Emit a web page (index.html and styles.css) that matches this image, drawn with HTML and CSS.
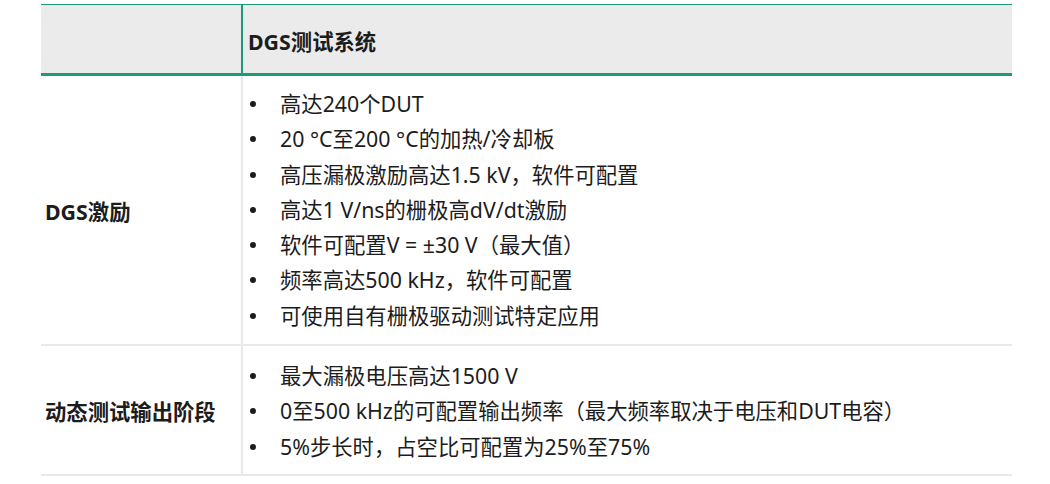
FILE: index.html
```html
<!DOCTYPE html>
<html lang="zh-CN">
<head>
<meta charset="utf-8">
<link rel="stylesheet" href="styles.css">
</head>
<body>
<div class="wrap">
<table class="spec">
  <thead>
    <tr>
      <th class="c1"></th>
      <th class="c2">DGS测试系统</th>
    </tr>
  </thead>
  <tbody>
    <tr>
      <td class="c1 label">DGS激励</td>
      <td class="c2">
        <ul class="list list-a">
          <li>高达240个DUT</li>
          <li>20 °C至200 °C的加热/冷却板</li>
          <li>高压漏极激励高达1.5 kV，软件可配置</li>
          <li>高达1 V/ns的栅极高dV/dt激励</li>
          <li>软件可配置V = ±30 V（最大值）</li>
          <li>频率高达500 kHz，软件可配置</li>
          <li>可使用自有栅极驱动测试特定应用</li>
        </ul>
      </td>
    </tr>
    <tr>
      <td class="c1 label">动态测试输出阶段</td>
      <td class="c2">
        <ul class="list list-b">
          <li>最大漏极电压高达1500 V</li>
          <li>0至500 kHz的可配置输出频率（最大频率取决于电压和DUT电容）</li>
          <li>5%步长时，占空比可配置为25%至75%</li>
        </ul>
      </td>
    </tr>
  </tbody>
</table>
</div>
</body>
</html>
```

FILE: styles.css
```css
html, body {
  margin: 0;
  padding: 0;
  background: #ffffff;
}
body {
  font-family: "Noto Sans", "Noto Sans CJK SC", sans-serif;
  color: #1c1c1c;
  font-size: 21.33px;
}
.wrap {
  padding: 4px 0 0 41px;
}
.spec {
  border-collapse: collapse;
  width: 971px;
  table-layout: fixed;
}
.spec th, .spec td {
  padding: 0;
  text-align: left;
  vertical-align: middle;
}
.spec thead th {
  background: #ebebeb;
  border-top: 1px solid #1d9a7c;
  border-bottom: 3px solid #1d9a7c;
  font-size: 21.33px;
  font-weight: 700;
  line-height: 30px;
  padding-top: 22px;
  padding-bottom: 16px;
}
.spec thead th.c1 {
  border-right: 2px solid #1d9a7c;
}
.spec .c1 {
  width: 200px;
}
.spec thead th.c2 {
  padding-left: 5px;
}
.spec tbody td {
  border-bottom: 2px solid #e9e9e9;
}
.spec tbody td.c1 {
  border-right: 2px solid #e9e9e9;
}
.spec tbody td.label {
  font-weight: 700;
  padding-left: 4px;
}
.list {
  list-style: none;
  margin: 0;
}
.list-a {
  padding: 10px 0 11px 0;
}
.list-b {
  padding: 12px 0 10px 0;
}
.list li {
  position: relative;
  line-height: 35.3px;
  padding-left: 37px;
  white-space: nowrap;
}
.list li::before {
  content: "";
  position: absolute;
  left: 7px;
  top: 15px;
  width: 6px;
  height: 6px;
  border-radius: 50%;
  background: #1c1c1c;
}
```
